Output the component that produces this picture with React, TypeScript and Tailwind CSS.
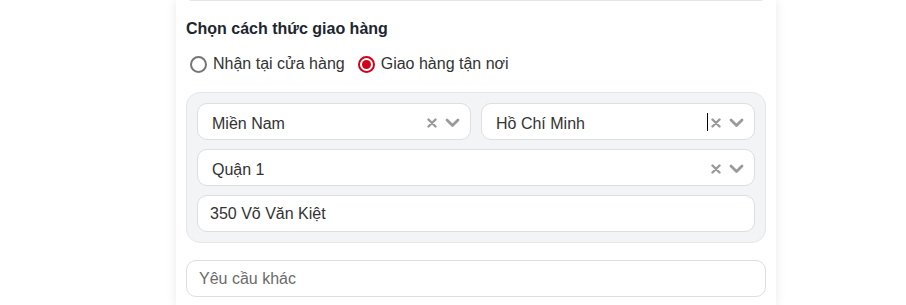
import React from "react";

const font = { fontFamily: '"Liberation Sans", Arial, sans-serif' };

const ClearIcon = () => (
  <svg width="10" height="10" viewBox="0 0 10 10" className="shrink-0">
    <path d="M1.5 1.5 L8.5 8.5 M8.5 1.5 L1.5 8.5" stroke="#9a9a9a" strokeWidth="2.4" strokeLinecap="round" />
  </svg>
);

const ChevronIcon = () => (
  <svg width="15" height="10" viewBox="0 0 15 10" className="shrink-0">
    <path d="M2 2 L7.5 7.5 L13 2" stroke="#9a9a9a" strokeWidth="2.8" fill="none" strokeLinecap="round" strokeLinejoin="round" />
  </svg>
);

interface SelectProps {
  value: string;
  caret?: boolean;
  grow?: boolean;
}

const SelectBox: React.FC<SelectProps> = ({ value, caret, grow }) => (
  <div
    className={
      grow
        ? "flex h-[37px] min-w-0 flex-1 items-center rounded-[10px] border border-[#dcdee2] bg-white pl-[14px] pr-[10px]"
        : "flex h-[37px] shrink-0 items-center rounded-[10px] border border-[#dcdee2] bg-white pl-[14px] pr-[10px]"
    }
  >
    <span className="flex-1 truncate pt-[5px] text-[16px] text-[#333]">{value}</span>
    {caret && <span className="mr-[3px] h-[18px] w-px bg-black" />}
    <div className="flex items-center gap-[8px] pt-[3px]">
      <ClearIcon />
      <ChevronIcon />
    </div>
  </div>
);

const Radio: React.FC<{ checked?: boolean; label: string }> = ({ checked, label }) => (
  <label className="flex items-center gap-[6px] text-[16px] text-[#333]">
    {checked ? (
      <span className="flex h-[17px] w-[17px] items-center justify-center rounded-full border-2 border-[#d0021b]">
        <span className="h-[9px] w-[9px] rounded-full bg-[#d0021b]" />
      </span>
    ) : (
      <span className="h-[17px] w-[17px] rounded-full border-2 border-[#767676]" />
    )}
    {label}
  </label>
);

export default function App() {
  return (
    <div className="flex min-h-[305px] bg-white pl-[176px]" style={font}>
      <div className="w-[600px] bg-white px-[10px] pb-[10px] shadow-[0_0_10px_rgba(0,0,0,0.09)]">
        <div className="-mt-[30px] h-[31px] rounded-md border border-[#e2e4e8]" />

        <h3 className="mt-[18px] text-[16px] font-bold leading-[20px] text-[#1c2631]">
          Chọn cách thức giao hàng
        </h3>

        <div className="mt-[13px] flex items-center gap-[13px] pl-[4px]">
          <Radio label="Nhận tại cửa hàng" />
          <Radio checked label="Giao hàng tận nơi" />
        </div>

        <div className="mt-[16px] flex flex-col gap-[9px] rounded-[14px] border border-[#e4e6ea] bg-[#f3f4f6] p-[10px]">
          <div className="flex gap-[10px]">
            <SelectBox value="Miền Nam" grow />
            <SelectBox value="Hồ Chí Minh" caret grow />
          </div>
          <SelectBox value="Quận 1" />
          <div className="flex h-[37px] shrink-0 items-center rounded-[10px] border border-[#dcdee2] bg-white px-[12px] text-[16px] text-[#333]">
            350 Võ Văn Kiệt
          </div>
        </div>

        <div className="mt-[17px] flex h-[37px] items-center rounded-[10px] border border-[#dcdee2] bg-white px-[12px] text-[16px] text-[#6b6b6b]">
          Yêu cầu khác
        </div>
      </div>
    </div>
  );
}
